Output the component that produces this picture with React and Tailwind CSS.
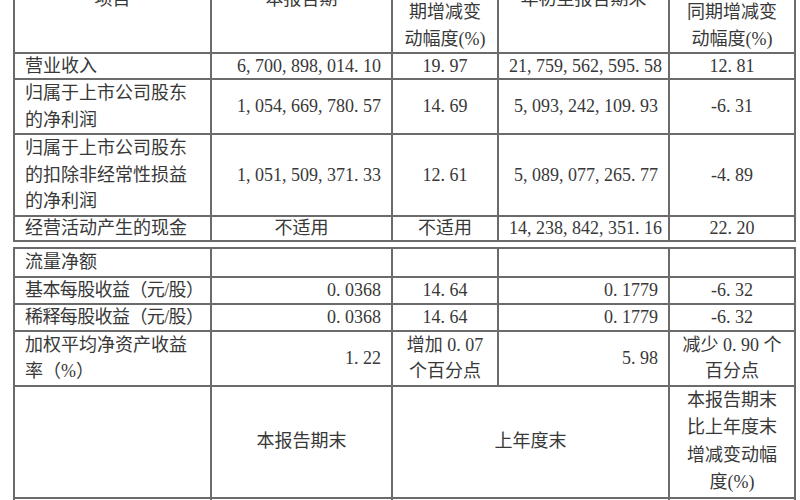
import React from "react";

// splits a number so separators take a full digit cell, like the report's typeface
const Num = ({ v }) => (
  <span className="whitespace-nowrap">
    {v.split("").map((c, i) =>
      c === "," || c === "." ? (
        <span key={i} className="inline-block w-[9px] text-left">
          {c}
        </span>
      ) : (
        <React.Fragment key={i}>{c}</React.Fragment>
      )
    )}
  </span>
);

const Lines = ({ items }) =>
  items.map((t, i) => (
    <React.Fragment key={i}>
      {i > 0 && <br />}
      {t}
    </React.Fragment>
  ));

const Td = ({ children, align = "left", className = "", colSpan }) => (
  <td
    colSpan={colSpan}
    className={`border-2 border-[#6b6b6b] px-[10px] py-0 align-middle ${
      align === "right" ? "text-right" : align === "center" ? "text-center" : "text-left"
    } ${className}`}
  >
    {children}
  </td>
);

const Cols = () => (
  <colgroup>
    <col className="w-[197px]" />
    <col className="w-[181px]" />
    <col className="w-[106px]" />
    <col className="w-[171px]" />
    <col className="w-[126px]" />
  </colgroup>
);

const topRows = [
  {
    lead: "leading-[24px]",
    name: ["营业收入"],
    a: "6,700,898,014.10",
    b: "19.97",
    c: "21,759,562,595.58",
    d: "12.81",
  },
  {
    lead: "leading-[26.5px]",
    name: ["归属于上市公司股东", "的净利润"],
    a: "1,054,669,780.57",
    b: "14.69",
    c: "5,093,242,109.93",
    d: "-6.31",
  },
  {
    lead: "leading-[26.5px]",
    name: ["归属于上市公司股东", "的扣除非经常性损益", "的净利润"],
    a: "1,051,509,371.33",
    b: "12.61",
    c: "5,089,077,265.77",
    d: "-4.89",
  },
];

const epsRows = [
  { name: "基本每股收益（元/股）", a: "0.0368", b: "14.64", c: "0.1779", d: "-6.32" },
  { name: "稀释每股收益（元/股）", a: "0.0368", b: "14.64", c: "0.1779", d: "-6.32" },
];

export default function App() {
  return (
    <div className="w-[800px] h-[500px] overflow-hidden bg-white text-[#383838] text-[18px] font-['Liberation_Serif','Noto_Sans_CJK_SC',serif]">
      <div className="-mt-[56px] pl-[13px]">
        {/* first page part */}
        <table className="table-fixed border-collapse w-[783px]">
          <Cols />
          <tbody>
            <tr className="leading-[26.5px]">
              <Td align="center">项目</Td>
              <Td align="center">本报告期</Td>
              <Td align="center" className="px-0">
                <Lines items={["本报告期", "比上年同", "期增减变", "动幅度(%)"]} />
              </Td>
              <Td align="center">年初至报告期末</Td>
              <Td align="center" className="px-0">
                <Lines items={["年初至报告", "期末比上年", "同期增减变", "动幅度(%)"]} />
              </Td>
            </tr>
            {topRows.map((r, i) => (
              <tr key={i} className={r.lead}>
                <Td>
                  <Lines items={r.name} />
                </Td>
                <Td align="right">
                  <Num v={r.a} />
                </Td>
                <Td align="center">
                  <Num v={r.b} />
                </Td>
                <Td align="right">
                  <Num v={r.c} />
                </Td>
                <Td align="center">
                  <Num v={r.d} />
                </Td>
              </tr>
            ))}
            <tr className="leading-[23px]">
              <Td>经营活动产生的现金</Td>
              <Td align="center">不适用</Td>
              <Td align="center">不适用</Td>
              <Td align="right">
                <Num v="14,238,842,351.16" />
              </Td>
              <Td align="center">
                <Num v="22.20" />
              </Td>
            </tr>
          </tbody>
        </table>

        {/* continued on next page */}
        <table className="table-fixed border-collapse w-[783px] mt-[5px]">
          <Cols />
          <tbody>
            <tr className="leading-[27px]">
              <Td>流量净额</Td>
              <Td />
              <Td />
              <Td />
              <Td />
            </tr>
            {epsRows.map((r, i) => (
              <tr key={i} className="leading-[25px]">
                <Td className="whitespace-nowrap tracking-[-0.6px]">{r.name}</Td>
                <Td align="right">
                  <Num v={r.a} />
                </Td>
                <Td align="center">
                  <Num v={r.b} />
                </Td>
                <Td align="right">
                  <Num v={r.c} />
                </Td>
                <Td align="center">
                  <Num v={r.d} />
                </Td>
              </tr>
            ))}
            <tr className="leading-[26.5px]">
              <Td>
                <Lines items={["加权平均净资产收益", "率（%）"]} />
              </Td>
              <Td align="right">
                <Num v="1.22" />
              </Td>
              <Td align="center" className="px-0">
                增加 <Num v="0.07" />
                <br />
                个百分点
              </Td>
              <Td align="right">
                <Num v="5.98" />
              </Td>
              <Td align="center" className="px-0">
                减少 <Num v="0.90" /> 个
                <br />
                百分点
              </Td>
            </tr>
            <tr className="leading-[27.5px]">
              <Td />
              <Td align="center">本报告期末</Td>
              <Td align="center" colSpan={2}>
                上年度末
              </Td>
              <Td align="center" className="px-0">
                <Lines items={["本报告期末", "比上年度末", "增减变动幅", "度(%)"]} />
              </Td>
            </tr>
            <tr className="leading-[26.5px]">
              <Td>&nbsp;</Td>
              <Td />
              <Td colSpan={2} />
              <Td />
            </tr>
          </tbody>
        </table>
      </div>
    </div>
  );
}
